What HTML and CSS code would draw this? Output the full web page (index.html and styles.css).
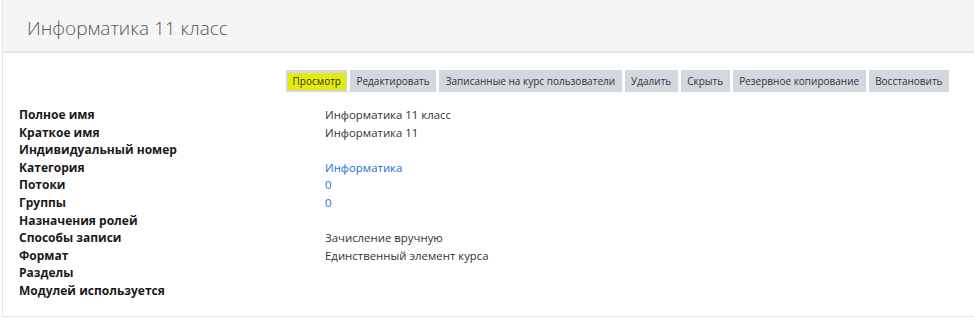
FILE: index.html
```html
<!DOCTYPE html>
<html lang="ru">
<head>
  <meta charset="UTF-8" />
  <title>Информатика 11 класс</title>
  <link rel="stylesheet" href="styles.css">
</head>
<body>
  <div class="course-page">
    <div class="course-header">
      <h1>Информатика 11 класс</h1>
    </div>

    <div class="course-body">
      <div class="tabs">
        <span class="tab active"><span class="mark">Просмотр</span></span>
        <span class="tab">Редактировать</span>
        <span class="tab">Записанные на курс пользователи</span>
        <span class="tab">Удалить</span>
        <span class="tab">Скрыть</span>
        <span class="tab">Резервное копирование</span>
        <span class="tab">Восстановить</span>
      </div>

      <dl class="details">
        <dt>Полное имя</dt><dd>Информатика 11 класс</dd>
        <dt>Краткое имя</dt><dd>Информатика 11</dd>
        <dt>Индивидуальный номер</dt><dd></dd>
        <dt>Категория</dt><dd><a href="#">Информатика</a></dd>
        <dt>Потоки</dt><dd><a href="#">0</a></dd>
        <dt>Группы</dt><dd><a href="#">0</a></dd>
        <dt>Назначения ролей</dt><dd></dd>
        <dt>Способы записи</dt><dd>Зачисление вручную</dd>
        <dt>Формат</dt><dd>Единственный элемент курса</dd>
        <dt>Разделы</dt><dd></dd>
        <dt>Модулей используется</dt><dd></dd>
      </dl>
    </div>
  </div>
</body>
</html>
```

FILE: styles.css
```css
body {
  margin: 0;
  background: #fff;
  font-family: 'Open Sans', 'Noto Sans', sans-serif;
  color: #333;
}
.course-page {
  margin-left: 2px;
  border-left: 1px solid #e4e4e4;
  border-bottom: 1px solid #e4e4e4;
}
.course-header {
  height: 51px;
  background: #f5f5f5;
  border-bottom: 2px solid #e6e6e6;
  padding-left: 24px;
  display: flex;
  align-items: center;
}
.course-header h1 {
  margin: 4px 0 0;
  font-size: 19px;
  font-weight: 300;
  color: #555;
}
.course-body {
  padding: 17px 25px 16px 16px;
}
.tabs {
  display: flex;
  justify-content: flex-end;
  gap: 3px;
}
.tab {
  background: #d3d8de;
  font-size: 10px;
  line-height: 22px;
  padding: 0 6.5px;
  color: #333;
}
.tab.active {
  padding: 3px 1px 2px 2px;
  line-height: 17px;
}
.tab .mark {
  display: block;
  background: #e2ec0e;
  padding: 0 5px;
}
.details {
  margin: 14px 0 0;
  display: grid;
  grid-template-columns: 306px 1fr;
  font-size: 12px;
  line-height: 17.6px;
}
.details dt {
  font-weight: 700;
  color: #1a1a1a;
}
.details dd {
  margin: 0;
  font-size: 11.4px;
}
.details a {
  color: #1f6fd0;
  text-decoration: none;
}
```
